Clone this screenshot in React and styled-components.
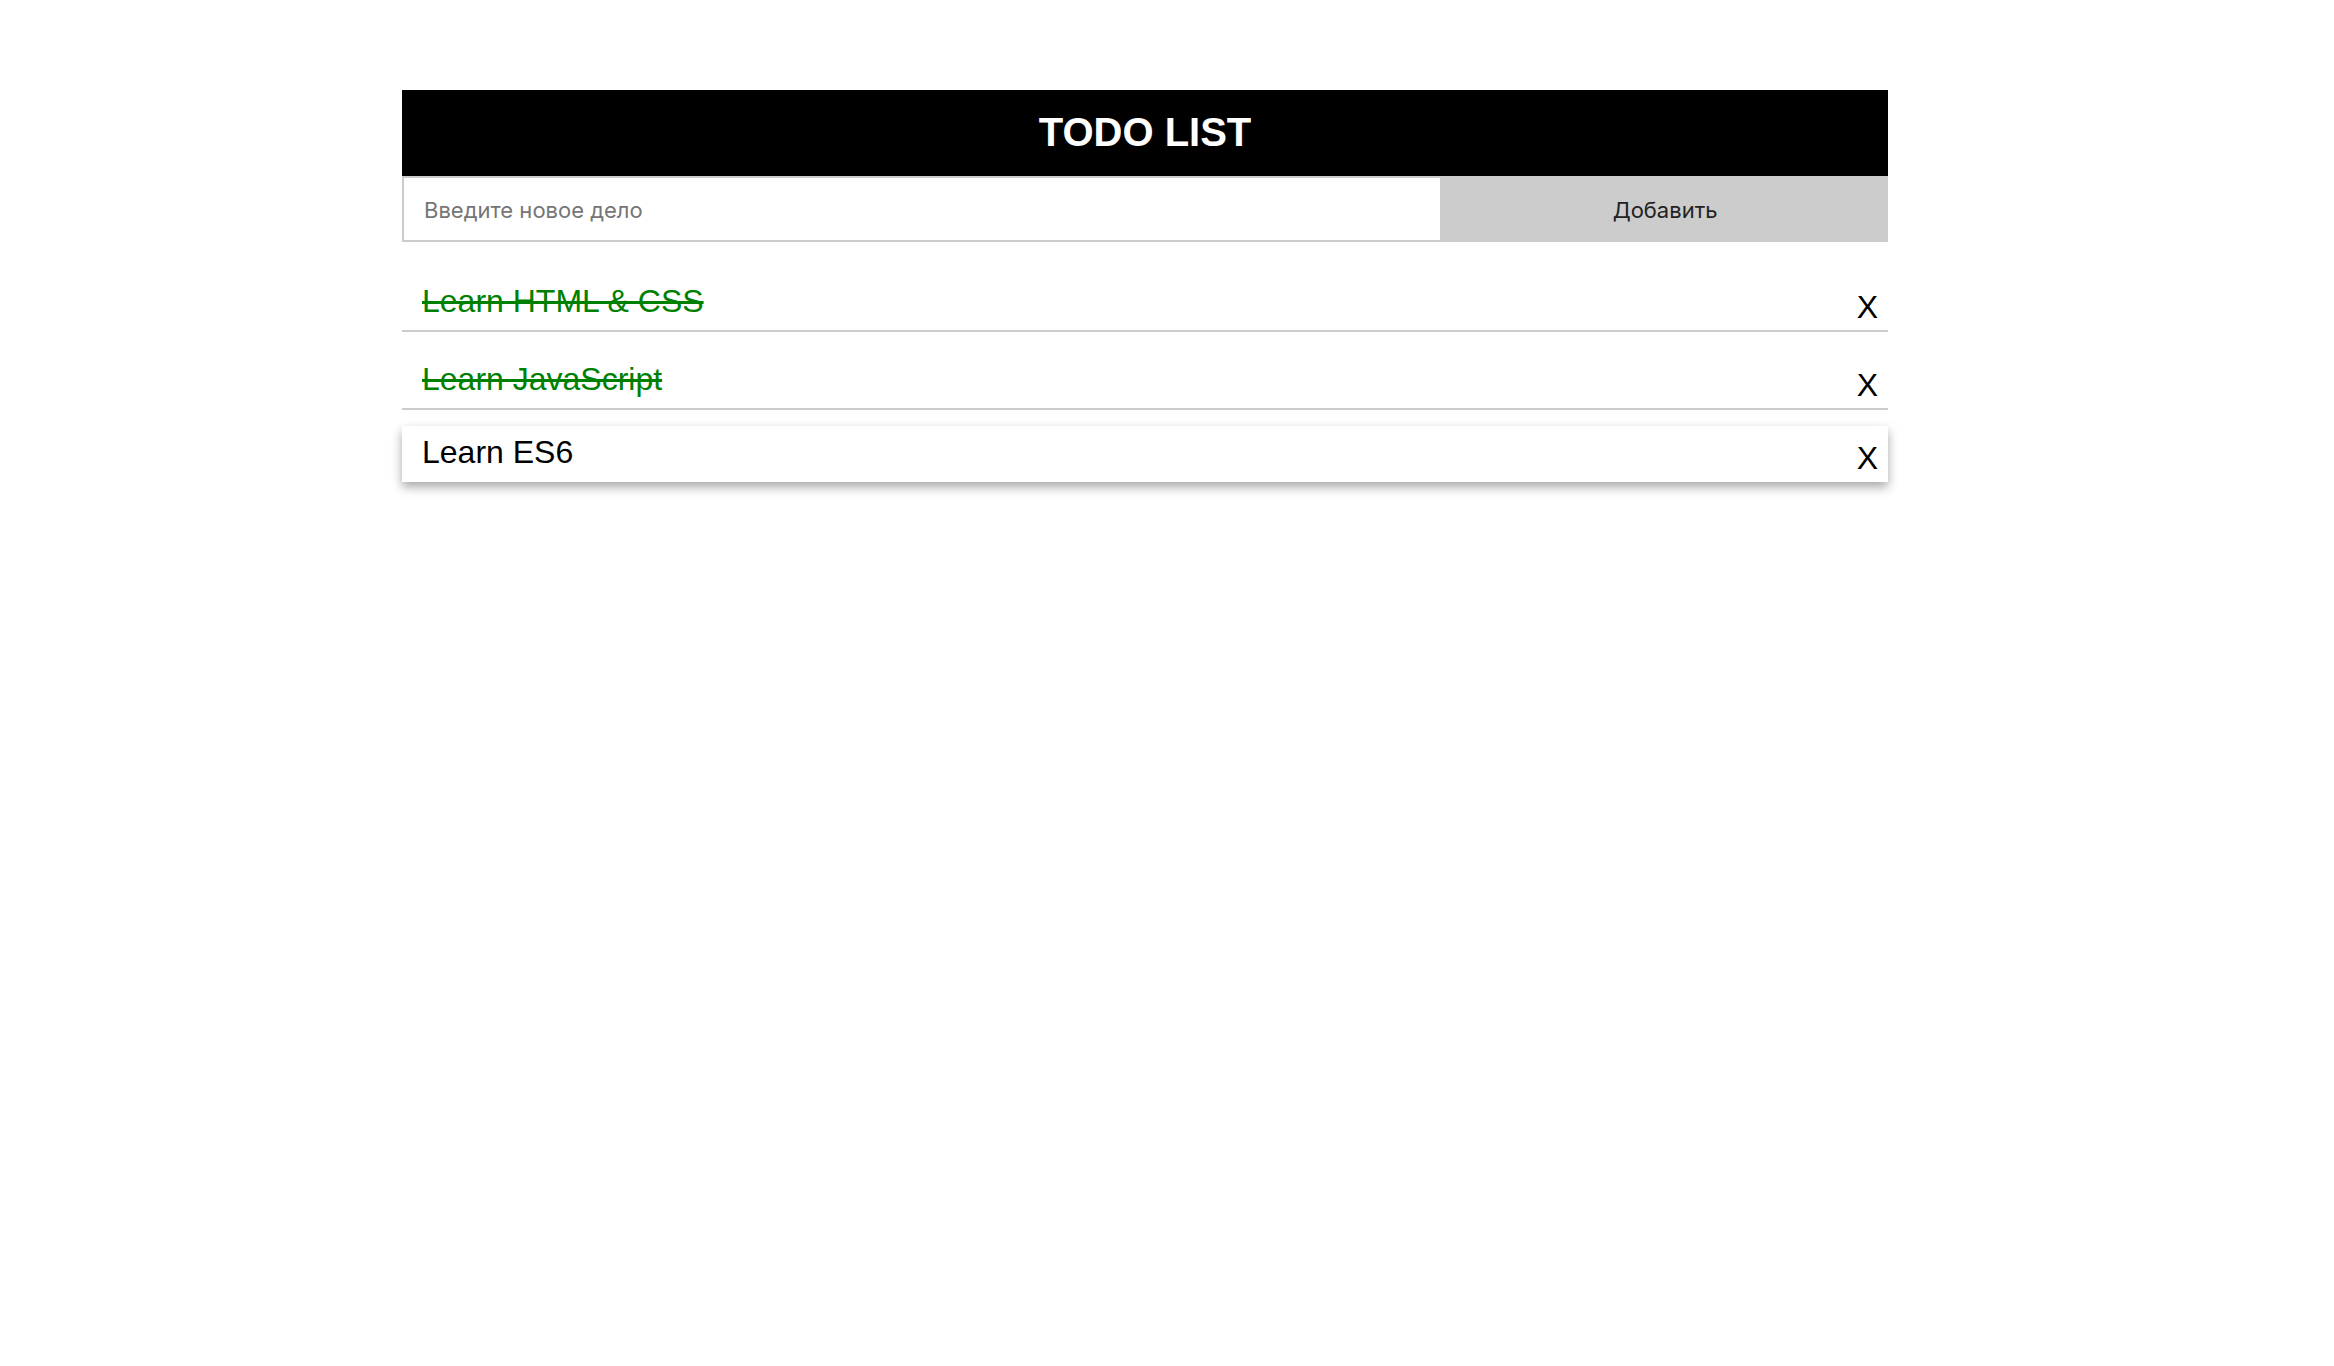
import React, { useState } from "react";
import styled, { createGlobalStyle } from "styled-components";

const GlobalStyle = createGlobalStyle`
  html, body {
    margin: 0;
    padding: 0;
    background: #ffffff;
    font-family: "Liberation Sans", Arial, sans-serif;
  }
  * { box-sizing: border-box; }
`;

const Page = styled.div`
  padding: 90px 0 40px 402px;
`;

const Container = styled.div`
  width: 1486px;
`;

const Header = styled.h1`
  margin: 0;
  height: 86px;
  padding-bottom: 2px;
  background: #000;
  color: #fff;
  display: flex;
  align-items: center;
  justify-content: center;
  font-family: "Liberation Sans", Arial, sans-serif;
  font-weight: 700;
  font-size: 40px;
  line-height: 46px;
`;

const Form = styled.form`
  display: flex;
  height: 66px;
`;

const Input = styled.input`
  width: 70%;
  height: 100%;
  border: 2px solid #cccccc;
  padding: 2px 20px 0;
  font-family: Inter, "Noto Sans", sans-serif;
  font-size: 22px;
  color: #222;
  outline: none;
  &::placeholder {
    color: #757575;
  }
`;

const AddButton = styled.button`
  width: 30%;
  height: 100%;
  border: none;
  padding: 2px 0 0;
  background: #cccccc;
  font-family: Inter, "Noto Sans", sans-serif;
  font-size: 22px;
  color: #222;
  cursor: pointer;
`;

const List = styled.ul`
  list-style: none;
  margin: 12px 0 0;
  padding: 0;
`;

const Item = styled.li`
  display: flex;
  justify-content: space-between;
  align-items: flex-start;
  padding: ${(p) => (p.$active ? "8px 10px 11px 20px" : "29px 10px 10px 20px")};
  margin-top: ${(p) => (p.$active ? "16px" : "0")};
  border-bottom: ${(p) => (p.$active ? "none" : "2px solid #cccccc")};
  box-shadow: ${(p) => (p.$active ? "0 5px 10px rgba(0, 0, 0, 0.35)" : "none")};
  background: #fff;
`;

const ItemText = styled.span`
  font-family: "Liberation Sans", Arial, sans-serif;
  font-size: 32px;
  line-height: 37px;
  color: ${(p) => (p.$done ? "#008000" : "#000")};
  text-decoration: ${(p) => (p.$done ? "line-through" : "none")};
  cursor: pointer;
`;

const RemoveButton = styled.button`
  border: none;
  background: none;
  padding: 12px 0 0;
  margin: 0;
  font-family: "Liberation Sans", Arial, sans-serif;
  font-size: 32px;
  line-height: 25px;
  color: #000;
  cursor: pointer;
`;

const initialTodos = [
  { id: 1, text: "Learn HTML & CSS", done: true },
  { id: 2, text: "Learn JavaScript", done: true },
  { id: 3, text: "Learn ES6", done: false },
];

export default function App() {
  const [todos, setTodos] = useState(initialTodos);
  const [value, setValue] = useState("");

  const add = (e) => {
    e.preventDefault();
    if (!value.trim()) return;
    setTodos([...todos, { id: Date.now(), text: value.trim(), done: false }]);
    setValue("");
  };

  return (
    <Page>
      <GlobalStyle />
      <Container>
        <Header>TODO LIST</Header>
        <Form onSubmit={add}>
          <Input
            placeholder="Введите новое дело"
            value={value}
            onChange={(e) => setValue(e.target.value)}
          />
          <AddButton type="submit">Добавить</AddButton>
        </Form>
        <List>
          {todos.map((t, i) => (
            <Item key={t.id} $active={i === 2}>
              <ItemText
                $done={t.done}
                onClick={() =>
                  setTodos(todos.map((x) => (x.id === t.id ? { ...x, done: !x.done } : x)))
                }
              >
                {t.text}
              </ItemText>
              <RemoveButton onClick={() => setTodos(todos.filter((x) => x.id !== t.id))}>
                X
              </RemoveButton>
            </Item>
          ))}
        </List>
      </Container>
    </Page>
  );
}
